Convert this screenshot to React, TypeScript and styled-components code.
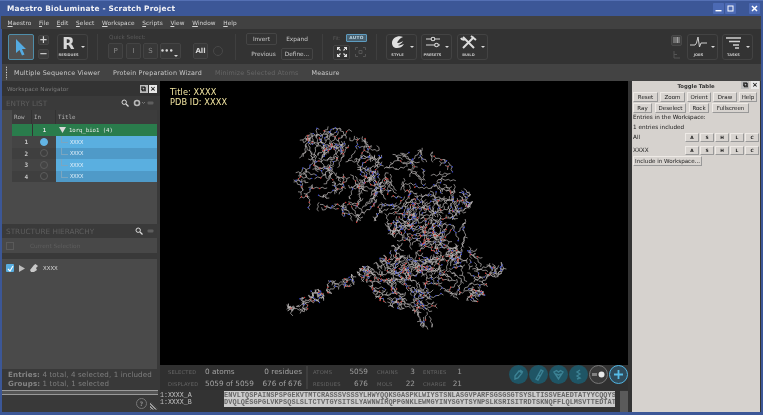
import React, { useMemo } from "react";
import styled, { createGlobalStyle } from "styled-components";

const Global = createGlobalStyle`
  html, body { margin: 0; padding: 0; background: #3c5797; overflow: hidden; }
  #root { width: 763px; height: 415px; }
  * { box-sizing: border-box; }
`;

const Win = styled.div`
  width: 763px; height: 415px; display: flex; flex-direction: column;
  background: #3c5797; padding: 0 2px 3px 2px; font-family: "DejaVu Sans", sans-serif;
  border-top: 1px solid #5470b4; overflow: hidden; filter: blur(0.3px);
`;
const TitleBar = styled.div`
  height: 15px; flex: none; display: flex; align-items: center; margin: 0 -2px; padding: 0 3px 0 7px;
  color: #f2f2f6; font-size: 7.4px; font-weight: bold; letter-spacing: 0.2px;
`;
const TitleText = styled.span`flex: 1;`;
const WinBtn = styled.span<{ $gap?: number }>`
  width: 11px; height: 11px; margin-left: ${p => p.$gap ?? 0}px; background: #4c6ab4; display: flex;
  align-items: center; justify-content: center; border-radius: 1px;
`;
const Menu = styled.div`
  height: 13px; flex: none; background: #414141; display: flex; align-items: center; gap: 7.6px; padding-left: 6.5px;
  color: #d4d4d4; font-size: 5.8px; letter-spacing: 0.1px; margin-left: -1px;
`;
const MenuItem = styled.span`
  &::first-letter { text-decoration: underline; }
`;
const Toolbar = styled.div`
  height: 35px; flex: none; background: #333333; display: flex; align-items: center; padding-left: 6px; margin-left: 0;
`;
const SelectBtn = styled.div`
  width: 26px; height: 26px; background: #505050; border: 1px solid #4f8eaa; border-radius: 2px;
  display: flex; align-items: center; justify-content: center;
`;
const PlusCol = styled.div`
  display: flex; flex-direction: column; gap: 4px; margin-left: 4px; width: 11px;
`;
const MiniBtn = styled.div`
  width: 11px; height: 10px; background: #3c3c3c; border: 1px solid #454545; border-radius: 2px; color: #d0d0d0;
  display: flex; align-items: center; justify-content: center; font-size: 10px; line-height: 1; font-weight: bold;
`;
const BigTool = styled.div<{ $w?: number; $ml?: number }>`
  position: relative; width: ${p => p.$w ?? 31}px; height: 26px; border: 1px solid #434343; border-radius: 3px;
  margin-left: ${p => p.$ml ?? 0}px; display: flex; flex-direction: column; align-items: center; padding-right: 8px;
`;
const ToolCaption = styled.span`
  position: absolute; left: 0; right: 8px; bottom: 2px; text-align: center; color: #c4c4c4; font-size: 3.6px; font-weight: bold;
`;
const Caret = styled.span`
  position: absolute; right: 2px; top: 11px; width: 0; height: 0;
  border-left: 2px solid transparent; border-right: 2px solid transparent; border-top: 2px solid #d8d8d8;
`;
const RLetter = styled.span`
  color: #d8d8d8; font-size: 16px; font-weight: bold; line-height: 17px;
`;
const VDiv = styled.div<{ $ml: number }>`
  width: 1px; height: 26px; background: #3f3f3f; margin-left: ${p => p.$ml}px; flex: none;
`;
const QuickGroup = styled.div`
  display: flex; flex-direction: column; margin-left: 10px; width: 118px; height: 27px;
`;
const QuickLabel = styled.div`
  height: 10px; color: #5c5c5c; font-size: 5.6px; line-height: 8px; padding-left: 1px;
`;
const QuickRow = styled.div`
  display: flex; align-items: center; height: 16px;
`;
const QBtn = styled.div<{ $w?: number; $ml?: number; $bright?: boolean }>`
  width: ${p => p.$w ?? 15}px; height: 16px; margin-left: ${p => p.$ml ?? 0}px; border: 1px solid #444; border-radius: 2px;
  background: #383838; color: ${p => (p.$bright ? "#d8d8d8" : "#8a8a8a")}; font-size: 7px; font-weight: ${p => (p.$bright ? "bold" : "normal")};
  display: flex; align-items: center; justify-content: center; position: relative; flex: none;
`;
const Ring = styled.span`
  width: 10px; height: 10px; border-radius: 50%; border: 1px solid #484848; margin-left: 5px; flex: none;
`;
const SelGrid = styled.div`
  display: grid; grid-template-columns: 35px 32px; row-gap: 3px; column-gap: 0; margin-left: 10px; color: #c0c0c0; font-size: 5.8px;
`;
const SelCell = styled.div<{ $boxed?: boolean; $dim?: boolean }>`
  height: 12px; display: flex; align-items: center; justify-content: center;
  border: 1px solid ${p => (p.$boxed ? "#454545" : "transparent")}; border-radius: 2px; color: ${p => (p.$dim ? "#a8a8a8" : "#c8c8c8")};
`;
const InvertCell = styled(SelCell)`width: 31px; `;
const FitGroup = styled.div`
  width: 34px; margin-left: 10px; display: flex; flex-direction: column; gap: 3px;
`;
const FitTop = styled.div`
  display: flex; align-items: center; justify-content: space-between; height: 8px; color: #5c5c5c; font-size: 5px;
`;
const AutoBadge = styled.span`
  width: 21px; height: 8px; border: 1px solid #5d9cc0; background: #48606f; color: #bcd4e0; border-radius: 1px;
  font-size: 4.3px; font-weight: bold; display: flex; align-items: center; justify-content: center; letter-spacing: .3px;
`;
const FitBottom = styled.div`
  display: flex; align-items: center; justify-content: space-between; height: 15px;
`;
const FitBtn = styled.div<{ $on?: boolean }>`
  width: ${p => (p.$on ? 17 : 13)}px; height: 15px; border: 1px solid ${p => (p.$on ? "#444" : "transparent")}; border-radius: 2px;
  display: flex; align-items: center; justify-content: center;
`;
const Spacer = styled.div`flex: 1;`;
const EndPad = styled.div`width: 8px; flex: none;`;
const RightStack = styled.div`
  width: 11px; display: flex; flex-direction: column; align-items: center; gap: 5px; margin-right: 5px;
`;
const ClusterBtn = styled.div`
  width: 11px; height: 11px; border: 1px solid #484848; background: #3e3e3e; border-radius: 2px; display: flex; align-items: center; justify-content: center;
`;
const SubBar = styled.div`
  height: 17px; flex: none; background: #434343; display: flex; align-items: center; color: #c8c8c8; font-size: 6.4px; letter-spacing: .14px;
`;
const Grip = styled.div`
  width: 3px; height: 14px; margin-left: 3px; margin-right: 6px;
  background-image: radial-gradient(circle, #e0e0e0 0.7px, transparent 0.9px); background-size: 3px 2.6px;
`;
const SubItem = styled.span<{ $dim?: boolean; $ml?: number }>`
  margin-left: ${p => p.$ml ?? 0}px; color: ${p => (p.$dim ? "#666" : "#c8c8c8")};
`;
const Body = styled.div`
  flex: 1; min-height: 0; display: flex; background: #333;
`;
const LeftCol = styled.div`
  width: 158px; flex: none; display: flex; flex-direction: column; background: #393939;
`;
const NavHead = styled.div`
  height: 15px; flex: none; display: flex; align-items: center; padding: 0 3px 0 5px; background: #333; color: #7c7c7c; font-size: 5.6px; letter-spacing: .1px;
`;
const NavTitle = styled.span`flex: 1;`;
const DockBtn = styled.span<{ $x?: boolean }>`
  width: 8px; height: 8px; background: ${p => (p.$x ? "#e8e8e8" : "#bcbcbc")}; color: #111; font-size: 7px; font-weight: bold; line-height: 8px; text-align: center; margin-left: 1px; display: block;
`;
const SectionHead = styled.div`
  height: 14px; flex: none; display: flex; align-items: center; padding: 0 6px 0 4px; background: #3a3a3a; color: #5e5e5e; font-size: 7.3px;
`;
const SectionTitle = styled.span`flex: 1;`;
const IconSlot = styled.span<{ $ml?: number }>`
  margin-left: ${p => p.$ml ?? 0}px; display: inline-flex; align-items: center;
`;
const TableWrap = styled.div`
  height: 114px; flex: none; background: #4a4a4a; margin-right: 3px; padding-left: 10px;
`;
const TableHead = styled.div`
  height: 14px; display: grid; grid-template-columns: 20px 24px 1fr; align-items: center; background: #3c3c3c; color: #b0b0b0;
  font-family: "DejaVu Sans Mono", monospace; font-size: 5.8px;
`;
const HeadCell = styled.span`
  height: 100%; display: flex; align-items: center; padding-left: 2px; border-right: 1px solid #333;
  &:last-child { border: none; }
`;
const GreenRow = styled.div`
  height: 12px; display: grid; grid-template-columns: 20px 24px 1fr; align-items: center; background: #2a7c4c; color: #e8e8e8;
  font-family: "DejaVu Sans Mono", monospace; font-size: 5.6px;
`;
const GreenIn = styled.span`
  text-align: center; font-weight: bold; border-left: 1px solid #333; height: 100%; line-height: 12px;
`;
const GroupCell = styled.span`
  display: flex; align-items: center; gap: 3px; padding-left: 3px;
`;
const EntryRow = styled.div<{ $alt: boolean }>`
  height: 11.5px; display: grid; grid-template-columns: 20px 24px 1fr; align-items: center;
  background: ${p => (p.$alt ? "#3f3f3f" : "#444")}; color: #c8c8c8; font-family: "DejaVu Sans Mono", monospace; font-size: 6px;
`;
const RowNum = styled.span`text-align: right; padding-right: 4px; font-weight: bold;`;
const InCell = styled.span`display: flex; justify-content: center;`;
const InDot = styled.span<{ $on: boolean }>`
  width: 8px; height: 8px; border-radius: 50%; border: 1px solid ${p => (p.$on ? "#62b4e4" : "#5c5c5c")}; background: ${p => (p.$on ? "#62b4e4" : "transparent")};
`;
const TitleCell = styled.span<{ $alt: boolean }>`
  height: 100%; background: ${p => (p.$alt ? "#4f9ac8" : "#5aafe0")}; color: #e0eef8; font-size: 5.5px; display: flex; align-items: center; padding-left: 14px; position: relative;
  &::before { content: ""; position: absolute; left: 5px; top: 0; bottom: 5px; width: 1px; background: #7ba6c0; }
  &::after { content: ""; position: absolute; left: 5px; top: 6px; width: 7px; height: 1px; background: #7ba6c0; }
`;
const HierCurrent = styled.div`
  height: 15px; flex: none; margin-right: 3px; background: #484848; display: flex; align-items: center; padding-left: 4px; color: #5e5e5e; font-size: 5.8px;
`;
const EmptyCheck = styled.span`
  width: 8px; height: 8px; border: 1px solid #5a5a5a; margin-right: 16px;
`;
const HierList = styled.div`
  height: 110px; flex: none; margin: 6px 3px 0 0; background: #4a4a4a; padding: 2px 0 0 4px; display: flex; align-items: flex-start; gap: 5px; color: #dcdcdc; font-size: 5.4px;
`;
const HierRow = styled.div`
  display: flex; align-items: center; height: 14px; gap: 5px;
`;
const Check = styled.span`
  width: 8px; height: 8px; background: #58aee0; border-radius: 1px; display: flex; align-items: center; justify-content: center;
`;
const LeftStatus = styled.div`
  flex: none; height: 21px; padding: 2px 0 0 6px; color: #7f7f7f; font-size: 7.1px; line-height: 8.6px; letter-spacing: .12px;
`;
const BoldLabel = styled.b`color: #858585;`;
const DoubleRule = styled.div`
  height: 5px; flex: none; border-top: 1px solid #9a9a9a; border-bottom: 1px solid #9a9a9a; background: #555; margin-right: 2px;
`;
const LeftFoot = styled.div`
  flex: 1; display: flex; align-items: center; justify-content: flex-end; padding-right: 2px; gap: 3px;
`;
const Help = styled.span`
  width: 11px; height: 11px; border-radius: 50%; border: 1px solid #777; color: #8a8a8a; font-size: 6px; font-weight: bold; display: flex; align-items: center; justify-content: center;
`;
const ResizeGrip = styled.span`
  width: 8px; height: 8px; margin-top: 4px;
  background: repeating-linear-gradient(45deg, #9a9a9a 0 1px, #3a3a3a 1px 2px); clip-path: polygon(0 0, 100% 100%, 0 100%);
`;
const Center = styled.div`
  width: 468px; flex: none; display: flex; flex-direction: column; background: #2f2f2f;
`;
const Viewer = styled.div`
  height: 284px; flex: none; background: #000; position: relative; overflow: hidden;
`;
const ViewerTitle = styled.div`
  position: absolute; left: 10px; top: 6px; color: #f3e6a2; font-size: 8.2px; line-height: 10.4px; letter-spacing: .1px;
`;
const MoleculeSvg = styled.svg`
  position: absolute; left: 0; top: 0;
`;
const Status = styled.div`
  height: 25px; flex: none; display: flex; align-items: center; padding-left: 8px; background: #303030; font-size: 7.3px; color: #9c9c9c; position: relative;
`;
const StatLeft = styled.div`
  width: 134px; display: grid; grid-template-columns: 37px 1fr auto; row-gap: 3px; align-items: baseline; flex: none; white-space: nowrap;
`;
const StatLabel = styled.span`
  color: #666; font-size: 5.2px; letter-spacing: .2px; white-space: nowrap;
`;
const StatVal = styled.span<{ $right?: boolean }>`
  color: #a2a2a2; text-align: ${p => (p.$right ? "right" : "left")};
`;
const StatSep = styled.div`
  width: 2px; height: 23px; background: #3e3e3e; margin: 0 4px 0 4px; flex: none;
`;
const StatRight = styled.div`
  display: grid; grid-template-columns: 24px 31px 9px 24px 14px 8px 24px 15px; row-gap: 3px; align-items: baseline; margin-left: 1px;
`;
const RightVal = styled.span`
  text-align: right; color: #9c9c9c;
`;
const Fabs = styled.div`
  position: absolute; right: 0; top: 0; display: flex; gap: 1px;
`;
const Fab = styled.span<{ $kind?: "teal" | "ring" | "plus" }>`
  width: 19px; height: 19px; border-radius: 50%; display: flex; align-items: center; justify-content: center;
  background: ${p => (p.$kind === "ring" ? "#3a3a3a" : p.$kind === "plus" ? "#2f4c5c" : "#1f5565")};
  border: ${p => (p.$kind === "ring" ? "1px solid #777" : p.$kind === "plus" ? "1.5px solid #52b6e4" : "none")};
`;
const SeqArea = styled.div`
  flex: 1; display: flex; background: #333; padding-top: 1px; min-height: 0;
`;
const SeqNames = styled.div`
  width: 64px; flex: none; color: #c0c0c0; font-family: "Liberation Mono", monospace; font-size: 6.6px; line-height: 7.4px; padding-top: 1px;
`;
const SeqBox = styled.div`
  width: 391px; height: 16px; flex: none; background: #cccccc; color: #666; font-family: "Liberation Mono", monospace; font-size: 6.9px; letter-spacing: .08px; line-height: 7.4px; font-weight: bold; overflow: hidden; white-space: nowrap; padding-top: .5px;
`;
const SeqScroll = styled.div`
  width: 8px; height: 21px; margin-left: 5px; background: #5a5a5a; flex: none;
`;
const Gutter = styled.div`
  width: 4px; flex: none; background: #333;
`;
const Panel = styled.div`
  width: 128px; flex: none; background: #d6d2ce; color: #1a1a1a; font-family: "DejaVu Sans", sans-serif; font-size: 5.7px;
  display: flex; flex-direction: column; padding: 0 1px;
`;
const PanelHead = styled.div`
  height: 10px; flex: none; display: flex; align-items: center; justify-content: center; position: relative; color: #333; font-weight: bold; font-size: 5.3px;
  background-image: radial-gradient(circle, #a8a8a8 0.5px, transparent 0.6px); background-size: 2px 2px;
`;
const PanelTitleText = styled.span`
  background: #d6d2ce; padding: 0 2px;
`;
const PanelDock = styled.span`
  position: absolute; right: 0; top: 0; display: flex; gap: 1px;
`;
const BtnRow = styled.div<{ $gap: number }>`
  display: flex; gap: ${p => p.$gap}px; height: 10px; flex: none; margin-top: 1px;
`;
const TkBtn = styled.span<{ $w?: number }>`
  width: ${p => (p.$w ? `${p.$w}px` : "auto")}; height: 10px; display: flex; align-items: center; justify-content: center;
  background: #d8d4d0; border: 1px solid #eeeae6; border-right-color: #999; border-bottom-color: #999; white-space: nowrap; font-size: 5.5px; flex: none;
`;
const PanelLine = styled.div`
  height: 9.5px; line-height: 9.5px; white-space: nowrap;
  &:first-of-type { margin-top: 3px; }
`;
const EntryLine = styled.div<{ $top?: number }>`
  display: flex; align-items: center; height: 10px; margin-top: ${p => p.$top ?? 0}px; flex: none;
`;
const EntryName = styled.span`flex: 1;`;
const SmallBtns = styled.div`
  display: flex; gap: 1px;
`;
const SmallBtn = styled.span`
  width: 14px; height: 9px; display: flex; align-items: center; justify-content: center; background: #d8d4d0;
  border: 1px solid #eeeae6; border-right-color: #999; border-bottom-color: #999; font-size: 4.4px; font-weight: bold;
`;
const IncludeBtn = styled(TkBtn)`
  width: 69px; margin-top: 1px; font-size: 5.6px;
`;

function Molecule() {
  const { gray, red, blue } = useMemo(() => {
    let s = 91731;
    const r = () => { s = (s * 16807) % 2147483647; return (s - 1) / 2147483646; };
    const blobs: [number, number, number, number][] = [
      [180, 94, 47, 16], [165, 66, 22, 4], [205, 115, 28, 5],
      [255, 112, 46, 15], [270, 150, 38, 12], [255, 175, 26, 5], [300, 120, 14, 2],
      [240, 199, 30, 9], [300, 194, 32, 9], [335, 189, 10, 1.5], [262, 220, 16, 3], [265, 240, 9, 1],
      [205, 193, 9, 1.2], [188, 199, 8, 1], [172, 206, 8, 1], [157, 215, 8, 1], [143, 224, 7, 1], [133, 231, 7, .7],
    ];
    const total = blobs.reduce((a, b) => a + b[3], 0);
    let g = "", rd = "", b = "";
    const inAny = (x: number, y: number) => blobs.some(c => (x - c[0]) ** 2 + (y - c[1]) ** 2 < c[2] * c[2]);
    for (let i = 0; i < 560; i++) {
      let pick = r() * total, c = blobs[0];
      for (const k of blobs) { pick -= k[3]; if (pick <= 0) { c = k; break; } }
      const t = r() * Math.PI * 2, d = Math.sqrt(r()) * c[2];
      let x = c[0] + Math.cos(t) * d, y = c[1] + Math.sin(t) * d;
      let ang = r() * Math.PI * 2;
      const n = 4 + Math.floor(r() * 4);
      let flip = 1;
      for (let j = 0; j < n; j++) {
        flip = -flip;
        ang += flip * 0.95 + (r() - 0.5) * 0.7;
        const len = 2.4 + r() * 1.2;
        let nx = x + Math.cos(ang) * len, ny = y + Math.sin(ang) * len;
        if (!inAny(nx, ny)) { ang += Math.PI * 0.8; nx = x + Math.cos(ang) * len; ny = y + Math.sin(ang) * len; }
        g += `M${x.toFixed(1)} ${y.toFixed(1)}L${nx.toFixed(1)} ${ny.toFixed(1)}`;
        const q = r();
        const dot = `M${nx.toFixed(1)} ${ny.toFixed(1)}h.01`;
        if (q < 0.09) rd += dot; else if (q < 0.2) b += dot;
        if (r() < 0.15) {
          const sa = ang + 1.4 * (r() < .5 ? -1 : 1);
          g += `M${nx.toFixed(1)} ${ny.toFixed(1)}l${(Math.cos(sa) * 3).toFixed(1)} ${(Math.sin(sa) * 3).toFixed(1)}`;
        }
        x = nx; y = ny;
      }
    }
    return { gray: g, red: rd, blue: b };
  }, []);
  return (
    <MoleculeSvg width="468" height="284" viewBox="0 0 468 284" fill="none">
      <path d={gray} stroke="#bdb9b9" strokeWidth="0.7" />
      <path d={blue} stroke="#2f3fd0" strokeWidth="1.4" strokeLinecap="round" />
      <path d={red} stroke="#d2322c" strokeWidth="1.4" strokeLinecap="round" />
    </MoleculeSvg>
  );
}

const Search = () => (
  <svg width="8" height="8" viewBox="0 0 8 8" fill="none"><circle cx="3.2" cy="3.2" r="2.2" stroke="#ddd" /><path d="M5 5l2.5 2.5" stroke="#ddd" strokeWidth="1.3" /></svg>
);
const Minus = () => (
  <svg width="7" height="4" viewBox="0 0 7 4"><rect x="0.5" y="0.5" width="6" height="3" rx="1" fill="#5e5e5e" /></svg>
);

const FabIcon = ({ d }: { d: string }) => (
  <svg width="13" height="13" viewBox="0 0 13 13" fill="none"><path d={d} stroke="#3c8294" strokeWidth="1.4" /></svg>
);

export default function App() {
  const menus = ["Maestro", "File", "Edit", "Select", "Workspace", "Scripts", "View", "Window", "Help"];
  return (
    <Win>
      <Global />
      <TitleBar>
        <TitleText>Maestro BioLuminate - Scratch Project</TitleText>
        <WinBtn><svg width="7" height="7" viewBox="0 0 7 7"><rect x="0.5" y="5" width="6" height="1.4" fill="#fff" /></svg></WinBtn>
        <WinBtn $gap={1}><svg width="7" height="7" viewBox="0 0 7 7" fill="none"><rect x="1" y="1" width="5" height="5" stroke="#fff" /></svg></WinBtn>
        <WinBtn $gap={13}><svg width="7" height="7" viewBox="0 0 7 7"><path d="M1 1l5 5M6 1L1 6" stroke="#fff" strokeWidth="1.5" /></svg></WinBtn>
      </TitleBar>
      <Menu>{menus.map(m => <MenuItem key={m}>{m}</MenuItem>)}</Menu>
      <Toolbar>
        <SelectBtn>
          <svg width="14" height="18" viewBox="0 0 14 18"><path d="M2 1l10 10H8l2.5 5.5-2.5 1L5.5 12 2 15z" fill="#54abe2" /></svg>
        </SelectBtn>
        <PlusCol><MiniBtn>+</MiniBtn><MiniBtn>−</MiniBtn></PlusCol>
        <BigTool $ml={8}><RLetter>R</RLetter><ToolCaption>RESIDUES</ToolCaption><Caret /></BigTool>
        <VDiv $ml={9} />
        <QuickGroup>
          <QuickLabel>Quick Select:</QuickLabel>
          <QuickRow>
            <QBtn>P</QBtn>
            <QBtn $ml={3}>I</QBtn>
            <QBtn $ml={2}>S</QBtn>
            <QBtn $w={21} $ml={2} $bright>•••&nbsp;&nbsp;&nbsp;<Caret /></QBtn>
            <QBtn $ml={12} $bright>All</QBtn>
            <Ring />
          </QuickRow>
        </QuickGroup>
        <VDiv $ml={9} />
        <SelGrid>
          <InvertCell $boxed>Invert</InvertCell><SelCell>Expand</SelCell>
          <SelCell>Previous</SelCell><SelCell $boxed>Define...</SelCell>
        </SelGrid>
        <VDiv $ml={9} />
        <FitGroup>
          <FitTop><span>Fit:</span><AutoBadge>AUTO</AutoBadge></FitTop>
          <FitBottom>
            <FitBtn $on>
              <svg width="10" height="10" viewBox="0 0 10 10" fill="none" stroke="#e0e0e0" strokeWidth="1.1"><path d="M0.5 3V.5H3M7 .5h2.5V3M9.5 7v2.5H7M3 9.5H.5V7M1 1l2.5 2.5M9 1L6.5 3.5M9 9L6.5 6.5M1 9l2.5-2.5" /></svg>
            </FitBtn>
            <FitBtn>
              <svg width="11" height="10" viewBox="0 0 11 10" fill="none" stroke="#555" strokeWidth="1"><path d="M.5 3V.5H3M8 .5h2.5V3M10.5 7v2.5H8M3 9.5H.5V7M4 3.5h3v3H4z" /></svg>
            </FitBtn>
          </FitBottom>
        </FitGroup>
        <VDiv $ml={9} />
        <BigTool $ml={9}>
          <svg width="16" height="16" viewBox="0 0 16 16"><path d="M13 2C8 0 2 3 2 8c0 3 2 5 5 5 3 0 5-1 7-4-3 1-5 2-6 1 2-.5 4-2 5-4-2 1.500-5 2.500-6 1.500C8 6 10 3 13 2z" fill="#e0e0e0" /></svg>
          <ToolCaption>STYLE</ToolCaption><Caret />
        </BigTool>
        <BigTool $ml={4}>
          <svg width="16" height="16" viewBox="0 0 16 16" fill="none" stroke="#d8d8d8" strokeWidth="1.1"><path d="M1 4h5M10 4h5M1 10h9M13 10h2" /><circle cx="8" cy="4" r="1.800" /><circle cx="11.500" cy="10" r="1.800" /></svg>
          <ToolCaption>PRESETS</ToolCaption><Caret />
        </BigTool>
        <BigTool $ml={5}>
          <svg width="17" height="16" viewBox="0 0 17 16" fill="none" stroke="#dcdcdc" strokeWidth="2"><path d="M3 2l11 11M14 2L3 13M11 1l5 4M1 3c1 2 3 2 4 1" /></svg>
          <ToolCaption>BUILD</ToolCaption><Caret />
        </BigTool>
        <Spacer />
        <RightStack>
          <ClusterBtn><svg width="7" height="6" viewBox="0 0 7 6"><path d="M1 0v6M3 0v6M4.500 0v6M6 0v6" stroke="#a0a0a0" strokeWidth="1" /></svg></ClusterBtn>
          <svg width="7" height="8" viewBox="0 0 7 8" fill="none"><path d="M1 0v7h6M1 3.500h3" stroke="#555" /></svg>
        </RightStack>
        <BigTool>
          <svg width="17" height="15" viewBox="0 0 17 15" fill="none"><path d="M0 10h5l1.500-2 1.500-6 1.500 10 1.500-4h6" stroke="#cfcfcf" /></svg>
          <ToolCaption>JOBS</ToolCaption><Caret />
        </BigTool>
        <BigTool $ml={4} $w={31}>
          <svg width="17" height="15" viewBox="0 0 17 15"><path d="M1 3h15M4 6.500h11M8 10h6M10 13h4" stroke="#d0d0d0" strokeWidth="1.700" /></svg>
          <ToolCaption>TASKS</ToolCaption><Caret />
        </BigTool>
        <EndPad />
      </Toolbar>
      <SubBar>
        <Grip />
        <SubItem>Multiple Sequence Viewer</SubItem>
        <SubItem $ml={13}>Protein Preparation Wizard</SubItem>
        <SubItem $ml={13} $dim>Minimize Selected Atoms</SubItem>
        <SubItem $ml={13}>Measure</SubItem>
      </SubBar>
      <Body>
        <LeftCol>
          <NavHead>
            <NavTitle>Workspace Navigator</NavTitle>
            <DockBtn>⧉</DockBtn><DockBtn $x>×</DockBtn>
          </NavHead>
          <SectionHead>
            <SectionTitle>ENTRY LIST</SectionTitle>
            <IconSlot><Search /></IconSlot>
            <IconSlot $ml={4}>
              <svg width="12" height="8" viewBox="0 0 12 8"><circle cx="4" cy="4" r="2.500" fill="none" stroke="#b8b8b8" strokeWidth="1.600" /><path d="M9 3l1.500 1.500L12 3" stroke="#777" fill="none" /></svg>
            </IconSlot>
            <IconSlot $ml={2}><Minus /></IconSlot>
          </SectionHead>
          <TableWrap>
            <TableHead><HeadCell>Row</HeadCell><HeadCell>In</HeadCell><HeadCell>Title</HeadCell></TableHead>
            <GreenRow>
              <span />
              <GreenIn>1</GreenIn>
              <GroupCell>
                <svg width="7" height="6" viewBox="0 0 7 6"><path d="M0 0h7L3.500 6z" fill="#d8d8d8" /></svg>
                1orq_bio1 (4)
              </GroupCell>
            </GreenRow>
            {[1, 2, 3, 4].map(n => (
              <EntryRow key={n} $alt={n % 2 === 0}>
                <RowNum>{n}</RowNum>
                <InCell><InDot $on={n === 1} /></InCell>
                <TitleCell $alt={n % 2 === 0}>XXXX</TitleCell>
              </EntryRow>
            ))}
          </TableWrap>
          <SectionHead>
            <SectionTitle>STRUCTURE HIERARCHY</SectionTitle>
            <IconSlot><Search /></IconSlot>
            <IconSlot $ml={4}><Minus /></IconSlot>
          </SectionHead>
          <HierCurrent><EmptyCheck />Current Selection</HierCurrent>
          <HierList>
            <HierRow>
              <Check><svg width="7" height="7" viewBox="0 0 7 7" fill="none"><path d="M1 4l2 2 3-5" stroke="#fff" strokeWidth="1.100" /></svg></Check>
              <svg width="6" height="7" viewBox="0 0 6 7"><path d="M0 0l6 3.500L0 7z" fill="#bdbdbd" /></svg>
              <svg width="8" height="8" viewBox="0 0 8 8"><path d="M0 6l4-5 1.500-1L8 2 6 4l1 2-3 2H1z" fill="#c8c8c8" /></svg>
              XXXX
            </HierRow>
          </HierList>
          <LeftStatus>
            <div><BoldLabel>Entries:</BoldLabel> 4 total, 4 selected, 1 included</div>
            <div><BoldLabel>Groups:</BoldLabel> 1 total, 1 selected</div>
          </LeftStatus>
          <DoubleRule />
          <LeftFoot><Help>?</Help><ResizeGrip /></LeftFoot>
        </LeftCol>
        <Center>
          <Viewer>
            <Molecule />
            <ViewerTitle>Title: XXXX<br />PDB ID: XXXX</ViewerTitle>
          </Viewer>
          <Status>
            <StatLeft>
              <StatLabel>SELECTED</StatLabel><StatVal>0 atoms</StatVal><StatVal $right>0 residues</StatVal>
              <StatLabel>DISPLAYED</StatLabel><StatVal>5059 of 5059</StatVal><StatVal $right>676 of 676</StatVal>
            </StatLeft>
            <StatSep />
            <StatRight>
              <StatLabel>ATOMS</StatLabel><RightVal>5059</RightVal><span />
              <StatLabel>CHAINS</StatLabel><RightVal>3</RightVal><span />
              <StatLabel>ENTRIES</StatLabel><RightVal>1</RightVal>
              <StatLabel>RESIDUES</StatLabel><RightVal>676</RightVal><span />
              <StatLabel>MOLS</StatLabel><RightVal>22</RightVal><span />
              <StatLabel>CHARGE</StatLabel><RightVal>21</RightVal>
            </StatRight>
            <Fabs>
              <Fab><FabIcon d="M3 8l4-5 3 2-4 5-3 1zM8 2l3 2" /></Fab>
              <Fab><FabIcon d="M4 11l5-9 2 1-5 9zM6 7l2 1" /></Fab>
              <Fab><FabIcon d="M2 4l4.500 7L11 4 8.500 2.500 6.500 4 4.500 2.500zM4 6l2.500 1L9 6" /></Fab>
              <Fab><FabIcon d="M8 2L5 4l3 2-3 2 3 2-3 1" /></Fab>
              <Fab $kind="ring">
                <svg width="13" height="7" viewBox="0 0 13 7"><path d="M0 2v3M2 2v3M4 2v3" stroke="#c8c8c8" /><circle cx="9.500" cy="3.500" r="3" fill="#e8e8e8" /></svg>
              </Fab>
              <Fab $kind="plus">
                <svg width="11" height="11" viewBox="0 0 11 11"><path d="M5.500 1v9M1 5.500h9" stroke="#56bce8" strokeWidth="1.800" /></svg>
              </Fab>
            </Fabs>
          </Status>
          <SeqArea>
            <SeqNames>1:XXXX_A<br />1:XXXX_B</SeqNames>
            <SeqBox>
              ENVLTQSPAINSPSPGEKVTMTCRASSSVSSSYLHWYQQKSGASPKLWIYSTSNLASGVPARFSGSGSGTSYSLTISSVEAEDTATYYCQQYS<br />
              DVQLQESGPGLVKPSQSLSLTCTVTGYSITSLYAWNWIRQPPGNKLEWMGYINYSGYTSYNPSLKSRISITRDTSKNQFFLQLMSVTTEDTAT
            </SeqBox>
            <SeqScroll />
          </SeqArea>
        </Center>
        <Gutter />
        <Panel>
          <PanelHead>
            <PanelTitleText>Toggle Table</PanelTitleText>
            <PanelDock><DockBtn>⧉</DockBtn><DockBtn $x>×</DockBtn></PanelDock>
          </PanelHead>
          <BtnRow $gap={2}>
            <TkBtn $w={25}>Reset</TkBtn><TkBtn $w={25}>Zoom</TkBtn><TkBtn $w={24}>Orient</TkBtn><TkBtn $w={24}>Draw</TkBtn><TkBtn $w={18}>Help</TkBtn>
          </BtnRow>
          <BtnRow $gap={3}>
            <TkBtn $w={19}>Ray</TkBtn><TkBtn $w={31}>Deselect</TkBtn><TkBtn $w={20}>Rock</TkBtn><TkBtn $w={37}>Fullscreen</TkBtn>
          </BtnRow>
          <PanelLine>Entries in the Workspace:</PanelLine>
          <PanelLine>1 entries included</PanelLine>
          <EntryLine>
            <EntryName>All</EntryName>
            <SmallBtns>{["A", "S", "H", "L", "C"].map(k => <SmallBtn key={k}>{k}</SmallBtn>)}</SmallBtns>
          </EntryLine>
          <EntryLine $top={3}>
            <EntryName>XXXX</EntryName>
            <SmallBtns>{["A", "S", "H", "L", "C"].map(k => <SmallBtn key={k}>{k}</SmallBtn>)}</SmallBtns>
          </EntryLine>
          <IncludeBtn>Include in Workspace...</IncludeBtn>
        </Panel>
      </Body>
    </Win>
  );
}
